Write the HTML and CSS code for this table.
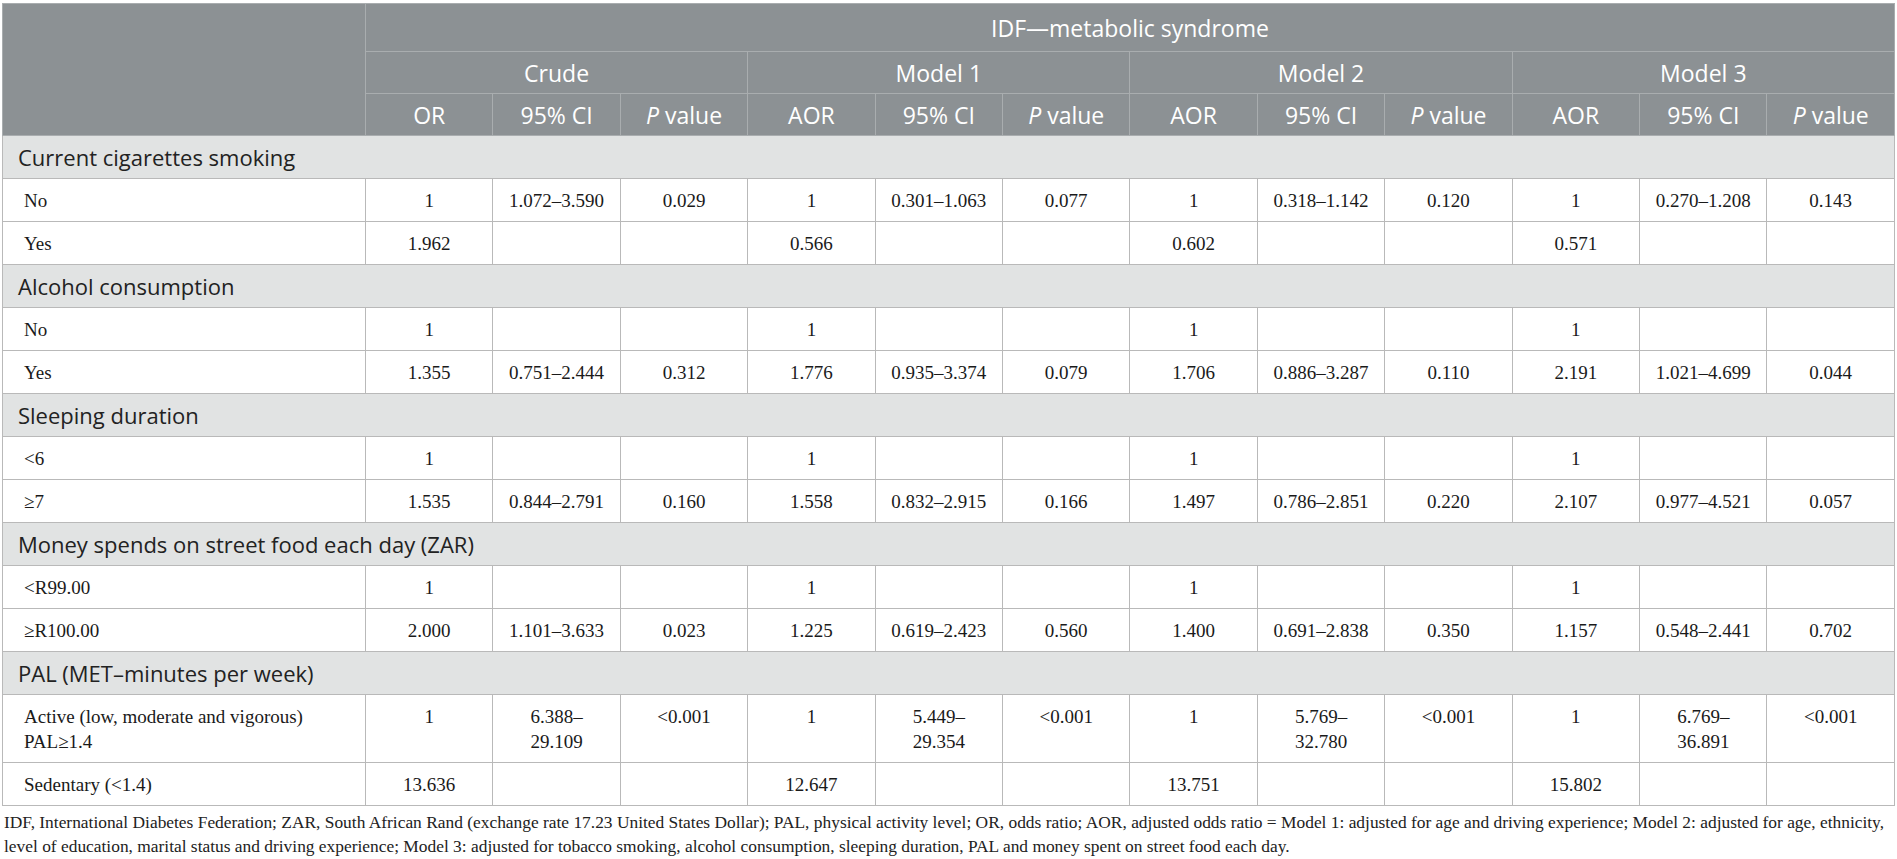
FILE: index.html
```html
<!DOCTYPE html>
<html lang="en">
<head>
  <meta charset="UTF-8" />
  <title>IDF metabolic syndrome – odds ratios</title>
  <link rel="stylesheet" href="styles.css">
</head>
<body>
  <table class="results">
    <colgroup>
      <col class="col-label">
      <col><col><col><col><col><col><col><col><col><col><col><col>
    </colgroup>
    <thead>
      <tr class="head-top">
        <th rowspan="3"></th>
        <th colspan="12">IDF—metabolic syndrome</th>
      </tr>
      <tr>
        <th colspan="3">Crude</th>
        <th colspan="3">Model 1</th>
        <th colspan="3">Model 2</th>
        <th colspan="3">Model 3</th>
      </tr>
      <tr>
        <th>OR</th><th>95% CI</th><th><i>P</i> value</th>
        <th>AOR</th><th>95% CI</th><th><i>P</i> value</th>
        <th>AOR</th><th>95% CI</th><th><i>P</i> value</th>
        <th>AOR</th><th>95% CI</th><th><i>P</i> value</th>
      </tr>
    </thead>
    <tbody>
      <tr class="section"><td colspan="13">Current cigarettes smoking</td></tr>
      <tr>
        <td>No</td>
        <td>1</td><td>1.072–3.590</td><td>0.029</td>
        <td>1</td><td>0.301–1.063</td><td>0.077</td>
        <td>1</td><td>0.318–1.142</td><td>0.120</td>
        <td>1</td><td>0.270–1.208</td><td>0.143</td>
      </tr>
      <tr>
        <td>Yes</td>
        <td>1.962</td><td></td><td></td>
        <td>0.566</td><td></td><td></td>
        <td>0.602</td><td></td><td></td>
        <td>0.571</td><td></td><td></td>
      </tr>

      <tr class="section"><td colspan="13">Alcohol consumption</td></tr>
      <tr>
        <td>No</td>
        <td>1</td><td></td><td></td>
        <td>1</td><td></td><td></td>
        <td>1</td><td></td><td></td>
        <td>1</td><td></td><td></td>
      </tr>
      <tr>
        <td>Yes</td>
        <td>1.355</td><td>0.751–2.444</td><td>0.312</td>
        <td>1.776</td><td>0.935–3.374</td><td>0.079</td>
        <td>1.706</td><td>0.886–3.287</td><td>0.110</td>
        <td>2.191</td><td>1.021–4.699</td><td>0.044</td>
      </tr>

      <tr class="section"><td colspan="13">Sleeping duration</td></tr>
      <tr>
        <td>&lt;6</td>
        <td>1</td><td></td><td></td>
        <td>1</td><td></td><td></td>
        <td>1</td><td></td><td></td>
        <td>1</td><td></td><td></td>
      </tr>
      <tr>
        <td>≥7</td>
        <td>1.535</td><td>0.844–2.791</td><td>0.160</td>
        <td>1.558</td><td>0.832–2.915</td><td>0.166</td>
        <td>1.497</td><td>0.786–2.851</td><td>0.220</td>
        <td>2.107</td><td>0.977–4.521</td><td>0.057</td>
      </tr>

      <tr class="section"><td colspan="13">Money spends on street food each day (ZAR)</td></tr>
      <tr>
        <td>&lt;R99.00</td>
        <td>1</td><td></td><td></td>
        <td>1</td><td></td><td></td>
        <td>1</td><td></td><td></td>
        <td>1</td><td></td><td></td>
      </tr>
      <tr>
        <td>≥R100.00</td>
        <td>2.000</td><td>1.101–3.633</td><td>0.023</td>
        <td>1.225</td><td>0.619–2.423</td><td>0.560</td>
        <td>1.400</td><td>0.691–2.838</td><td>0.350</td>
        <td>1.157</td><td>0.548–2.441</td><td>0.702</td>
      </tr>

      <tr class="section"><td colspan="13">PAL (MET–minutes per week)</td></tr>
      <tr>
        <td>Active (low, moderate and vigorous)<br>PAL≥1.4</td>
        <td>1</td><td>6.388–<br>29.109</td><td>&lt;0.001</td>
        <td>1</td><td>5.449–<br>29.354</td><td>&lt;0.001</td>
        <td>1</td><td>5.769–<br>32.780</td><td>&lt;0.001</td>
        <td>1</td><td>6.769–<br>36.891</td><td>&lt;0.001</td>
      </tr>
      <tr>
        <td>Sedentary (&lt;1.4)</td>
        <td>13.636</td><td></td><td></td>
        <td>12.647</td><td></td><td></td>
        <td>13.751</td><td></td><td></td>
        <td>15.802</td><td></td><td></td>
      </tr>
    </tbody>
  </table>

  <p class="note">IDF, International Diabetes Federation; ZAR, South African Rand (exchange rate 17.23 United States Dollar); PAL, physical activity level; OR, odds ratio; AOR, adjusted odds ratio = Model 1: adjusted for age and driving experience; Model 2: adjusted for age, ethnicity, level of education, marital status and driving experience; Model 3: adjusted for tobacco smoking, alcohol consumption, sleeping duration, PAL and money spent on street food each day.</p>
</body>
</html>
```

FILE: styles.css
```css
body {
  margin: 3px 2px 0;
  background: #fff;
  color: #1a1a1a;
  font-family: "Liberation Serif", "Times New Roman", serif;
}

.results {
  width: 1893px;
  table-layout: fixed;
  border-collapse: collapse;
  border: 1px solid #b3b3b3;
}
.col-label {
  width: 363px;
}

th {
  background: #8c9194;
  color: #fff;
  font-family: "Open Sans", "Noto Sans", sans-serif;
  font-weight: 400;
  font-size: 23px;
  line-height: 28px;
  height: 41px;
  padding: 0 6px;
  border: 1px solid #a9adaf;
  text-align: center;
  vertical-align: middle;
}
.head-top th {
  height: 47px;
}
th i {
  font-style: italic;
}

td {
  border: 1px solid #b9b9b9;
  font-size: 19px;
  line-height: 25px;
  padding: 9px 6px 8px;
  text-align: center;
  vertical-align: top;
}
td:first-child {
  text-align: left;
  padding-left: 21px;
}

.section td {
  background: #e1e3e3;
  font-family: "Open Sans", "Noto Sans", sans-serif;
  font-size: 22px;
  line-height: 28px;
  padding: 7px 15px 7px;
  color: #222;
}

.note {
  margin: 4px 0 0 2px;
  font-size: 17.4px;
  line-height: 24px;
  color: #222;
}
```
